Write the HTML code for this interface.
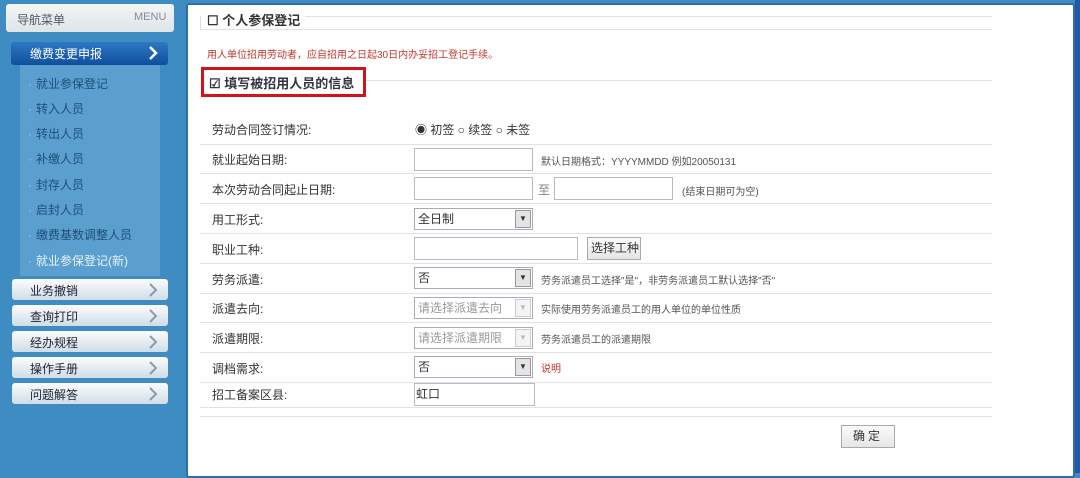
<!DOCTYPE html>
<html><head><meta charset="utf-8"><style>
*{margin:0;padding:0;box-sizing:border-box}
body{width:1080px;height:473px;overflow:hidden;background:#3f8cc2;font-family:"Liberation Sans","Noto Sans CJK SC",sans-serif;font-size:12px;color:#333;position:relative}
.a{position:absolute}
.hdr{left:6px;top:4px;width:168px;height:28px;background:linear-gradient(#f4f6f7,#dfe4e7);border-radius:3px}
.hdr span{position:absolute;top:7px;font-size:12px;color:#556}
.act{left:11px;top:42px;width:157px;height:23px;background:linear-gradient(#2d78c4,#0f4f9c);border-radius:3px;color:#fff;font-size:12px;padding:3px 0 0 19px}
.sub{left:20px;top:65px;width:140px;height:211px;background:#5a9fcd}
.si{left:28px;font-size:12px;color:#1f4e7a}
.si:before{content:"·";margin-right:4px;color:#9cc}
.btn{left:12px;width:156px;height:21px;background:linear-gradient(#fbfcfd,#cfdde6);border-radius:3px;color:#223;font-size:12px;padding:3px 0 0 18px}
.chev{position:absolute;right:10px;top:3px}
.main{left:186px;top:3px;width:889px;height:475px;background:#fefefe;border:2px solid #2f6ea8;border-radius:3px}
.ln{left:200px;width:792px;height:1px;background:#e2e2e6}
.lbl{left:212px;font-size:12px;color:#333}
.in{background:#fff;border:1px solid #b8bcc0;height:23px}
.sel{background:#fff;border:1px solid #aab;height:22px;font-size:12px;line-height:20px;padding:0 0 0 3px}
.sel i{position:absolute;right:1px;top:1px;width:16px;height:18px;background:#e4e4e4;border:1px solid #999;font-style:normal;font-size:8px;text-align:center;line-height:16px}
.hint{font-size:10px;color:#555}
</style></head><body>
<div class="a hdr"><span style="left:11px">导航菜单</span><span style="left:128px;color:#889;font-size:11px">MENU</span></div>
<div class="a act">缴费变更申报<svg class="chev" width="10" height="16" viewBox="0 0 10 16" style="top:3px"><path d="M2 2 L8 8 L2 14" fill="none" stroke="#fff" stroke-width="2.5"/></svg></div>
<div class="a sub"></div>
<div class="a si" style="top:75px">就业参保登记</div>
<div class="a si" style="top:100px">转入人员</div>
<div class="a si" style="top:125px">转出人员</div>
<div class="a si" style="top:150px">补缴人员</div>
<div class="a si" style="top:176px">封存人员</div>
<div class="a si" style="top:201px">启封人员</div>
<div class="a si" style="top:226px">缴费基数调整人员</div>
<div class="a si" style="top:252px;color:#e8f2fa">就业参保登记(新)</div>
<div class="a btn" style="top:279px">业务撤销<svg class="chev" width="10" height="16" viewBox="0 0 10 16"><path d="M2 2 L8 8 L2 14" fill="none" stroke="#8a9caa" stroke-width="2"/></svg></div>
<div class="a btn" style="top:305px">查询打印<svg class="chev" width="10" height="16" viewBox="0 0 10 16"><path d="M2 2 L8 8 L2 14" fill="none" stroke="#8a9caa" stroke-width="2"/></svg></div>
<div class="a btn" style="top:331px">经办规程<svg class="chev" width="10" height="16" viewBox="0 0 10 16"><path d="M2 2 L8 8 L2 14" fill="none" stroke="#8a9caa" stroke-width="2"/></svg></div>
<div class="a btn" style="top:357px">操作手册<svg class="chev" width="10" height="16" viewBox="0 0 10 16"><path d="M2 2 L8 8 L2 14" fill="none" stroke="#8a9caa" stroke-width="2"/></svg></div>
<div class="a btn" style="top:383px">问题解答<svg class="chev" width="10" height="16" viewBox="0 0 10 16"><path d="M2 2 L8 8 L2 14" fill="none" stroke="#8a9caa" stroke-width="2"/></svg></div>
<div class="a main"></div>
<div class="a" style="left:1075px;top:0;width:5px;height:473px;background:#2358a8"></div>
<div class="a ln" style="top:16px;left:305px;width:687px"></div>
<div class="a ln" style="top:29px"></div>
<div class="a" style="left:200px;top:16px;width:1px;height:14px;background:#ddd"></div>
<div class="a" style="left:207px;top:10px;font-size:13px;font-weight:bold;color:#333">☐ 个人参保登记</div>
<div class="a" style="left:207px;top:46px;font-size:10px;color:#c0392b">用人单位招用劳动者，应自招用之日起30日内办妥招工登记手续。</div>
<div class="a ln" style="top:80px;left:366px;width:626px"></div>
<div class="a" style="left:201px;top:67px;width:165px;height:30px;border:3px solid #d0141c"></div>
<div class="a" style="left:209px;top:73px;font-size:13px;font-weight:bold;color:#334">☑ 填写被招用人员的信息</div>
<div class="a lbl" style="top:121px">劳动合同签订情况:</div>
<div class="a" style="left:415px;top:121px;font-size:12px">◉ 初签 ○ 续签 ○ 未签</div>
<div class="a ln" style="top:144px"></div>
<div class="a lbl" style="top:151px">就业起始日期:</div>
<div class="a in" style="left:414px;top:148px;width:119px"></div>
<div class="a hint" style="left:541px;top:153px">默认日期格式：YYYYMMDD 例如20050131</div>
<div class="a ln" style="top:173px"></div>
<div class="a lbl" style="top:181px">本次劳动合同起止日期:</div>
<div class="a in" style="left:414px;top:177px;width:119px"></div>
<div class="a" style="left:538px;top:181px;color:#888">至</div>
<div class="a in" style="left:554px;top:177px;width:119px"></div>
<div class="a hint" style="left:682px;top:183px">(结束日期可为空)</div>
<div class="a ln" style="top:203px"></div>
<div class="a lbl" style="top:211px">用工形式:</div>
<div class="a sel" style="left:414px;top:208px;width:119px">全日制<i>▼</i></div>
<div class="a ln" style="top:233px"></div>
<div class="a lbl" style="top:241px">职业工种:</div>
<div class="a in" style="left:414px;top:237px;width:164px"></div>
<div class="a" style="left:587px;top:237px;width:54px;height:23px;border:1px solid #aaa;background:linear-gradient(#fafafa,#e6e6e6);font-size:12px;line-height:21px;padding-left:3px">选择工种</div>
<div class="a ln" style="top:263px"></div>
<div class="a lbl" style="top:271px">劳务派遣:</div>
<div class="a sel" style="left:414px;top:267px;width:119px">否<i>▼</i></div>
<div class="a hint" style="left:541px;top:272px">劳务派遣员工选择"是"，非劳务派遣员工默认选择"否"</div>
<div class="a ln" style="top:293px"></div>
<div class="a lbl" style="top:300px">派遣去向:</div>
<div class="a sel" style="left:414px;top:297px;width:119px;color:#999">请选择派遣去向<i style="background:#f4f4f4;border-color:#ccc;color:#bbb">▼</i></div>
<div class="a hint" style="left:541px;top:301px">实际使用劳务派遣员工的用人单位的单位性质</div>
<div class="a ln" style="top:322px"></div>
<div class="a lbl" style="top:330px">派遣期限:</div>
<div class="a sel" style="left:414px;top:327px;width:119px;color:#999">请选择派遣期限<i style="background:#f4f4f4;border-color:#ccc;color:#bbb">▼</i></div>
<div class="a hint" style="left:541px;top:331px">劳务派遣员工的派遣期限</div>
<div class="a ln" style="top:352px"></div>
<div class="a lbl" style="top:360px">调档需求:</div>
<div class="a sel" style="left:414px;top:356px;width:119px">否<i>▼</i></div>
<div class="a" style="left:541px;top:360px;font-size:10px;color:#c0392b">说明</div>
<div class="a ln" style="top:382px"></div>
<div class="a lbl" style="top:386px">招工备案区县:</div>
<div class="a in" style="left:414px;top:383px;width:121px;line-height:21px;padding-left:1px">虹口</div>
<div class="a ln" style="top:407px"></div>
<div class="a ln" style="top:416px"></div>
<div class="a" style="left:841px;top:425px;width:54px;height:23px;border:1px solid #aaa;background:linear-gradient(#fafafa,#e6e6e6);font-size:12px;text-align:center;line-height:21px;letter-spacing:3px">确定</div>
</body></html>
